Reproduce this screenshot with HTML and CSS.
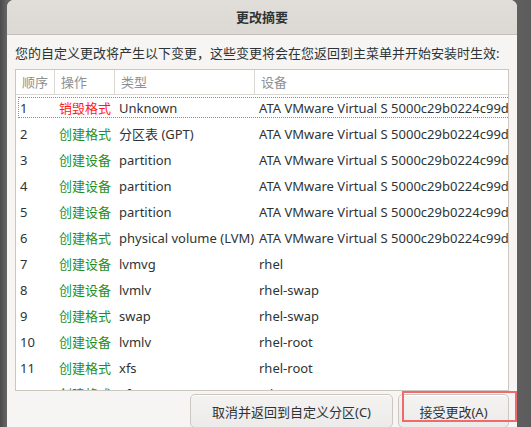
FILE: index.html
```html
<!DOCTYPE html>
<html lang="zh-CN">
<head>
<meta charset="utf-8">
<title>更改摘要</title>
<link rel="stylesheet" href="styles.css">
</head>
<body>
<div class="dialog">
  <div class="titlebar">更改摘要</div>
  <div class="content">
    <div class="desc">您的自定义更改将产生以下变更，这些变更将会在您返回到主菜单并开始安装时生效:</div>
    <div class="table">
      <div class="row head">
        <div class="c c1">顺序</div>
        <div class="c c2">操作</div>
        <div class="c c3">类型</div>
        <div class="c c4">设备</div>
      </div>
      <div class="body">
        <div class="row focus">
          <div class="c c1">1</div><div class="c c2 destroy">销毁格式</div><div class="c c3">Unknown</div><div class="c c4">ATA VMware Virtual S 5000c29b0224c99d</div>
        </div>
        <div class="row">
          <div class="c c1">2</div><div class="c c2 create">创建格式</div><div class="c c3">分区表 (GPT)</div><div class="c c4">ATA VMware Virtual S 5000c29b0224c99d</div>
        </div>
        <div class="row">
          <div class="c c1">3</div><div class="c c2 create">创建设备</div><div class="c c3">partition</div><div class="c c4">ATA VMware Virtual S 5000c29b0224c99d</div>
        </div>
        <div class="row">
          <div class="c c1">4</div><div class="c c2 create">创建设备</div><div class="c c3">partition</div><div class="c c4">ATA VMware Virtual S 5000c29b0224c99d</div>
        </div>
        <div class="row">
          <div class="c c1">5</div><div class="c c2 create">创建设备</div><div class="c c3">partition</div><div class="c c4">ATA VMware Virtual S 5000c29b0224c99d</div>
        </div>
        <div class="row">
          <div class="c c1">6</div><div class="c c2 create">创建格式</div><div class="c c3">physical volume (LVM)</div><div class="c c4">ATA VMware Virtual S 5000c29b0224c99d</div>
        </div>
        <div class="row">
          <div class="c c1">7</div><div class="c c2 create">创建设备</div><div class="c c3">lvmvg</div><div class="c c4">rhel</div>
        </div>
        <div class="row">
          <div class="c c1">8</div><div class="c c2 create">创建设备</div><div class="c c3">lvmlv</div><div class="c c4">rhel-swap</div>
        </div>
        <div class="row">
          <div class="c c1">9</div><div class="c c2 create">创建格式</div><div class="c c3">swap</div><div class="c c4">rhel-swap</div>
        </div>
        <div class="row">
          <div class="c c1">10</div><div class="c c2 create">创建设备</div><div class="c c3">lvmlv</div><div class="c c4">rhel-root</div>
        </div>
        <div class="row">
          <div class="c c1">11</div><div class="c c2 create">创建格式</div><div class="c c3">xfs</div><div class="c c4">rhel-root</div>
        </div>
        <div class="row">
          <div class="c c1">12</div><div class="c c2 create">创建格式</div><div class="c c3">xfs</div><div class="c c4">sda1</div>
        </div>
      </div>
    </div>
    <div class="buttons">
      <button class="btn cancel">取消并返回到自定义分区(C)</button>
      <button class="btn accept">接受更改(A)</button>
    </div>
  </div>
</div>
<div class="highlight"></div>
</body>
</html>
```

FILE: styles.css
```css
html, body {
  margin: 0;
  padding: 0;
}
body {
  width: 531px;
  height: 427px;
  overflow: hidden;
  background: linear-gradient(to right, #4a4a4a 0px, #666 7px, #5f5f5f 517px, #5c5c5c 531px);
  font-family: "Noto Sans", "Noto Sans CJK SC", sans-serif;
  font-size: 13px;
  color: #2e3436;
  position: relative;
}
.dialog {
  margin-left: 7px;
  width: 510px;
  height: 427px;
  background: #f6f5f4;
  border-radius: 7px 7px 0 0;
  overflow: hidden;
  display: flex;
  flex-direction: column;
}
.titlebar {
  height: 34px;
  line-height: 34px;
  text-align: center;
  font-weight: bold;
  background: linear-gradient(#e1deda, #dcd8d4);
  border-bottom: 1px solid #c4bfba;
  flex: none;
}
.content {
  padding: 0 8px;
  display: flex;
  flex-direction: column;
}
.desc {
  padding-top: 9px;
  line-height: 19px;
  height: 19px;
  margin-bottom: 6px;
  white-space: nowrap;
}
.table {
  height: 320px;
  border: 1px solid #cdc7c2;
  background: #fff;
  overflow: hidden;
  display: flex;
  flex-direction: column;
}
.row {
  display: grid;
  grid-template-columns: 39px 60px 140px 1fr;
  height: 26px;
  line-height: 26px;
  position: relative;
}
.row.head {
  height: 24px;
  line-height: 24px;
  border-bottom: 1px solid #dad6d2;
  color: #8f9191;
  flex: none;
}
.row.head .c {
  padding-left: 6px;
  border-right: 1px solid #dad6d2;
}
.row.head .c4 {
  border-right: none;
}
.c {
  padding-left: 4px;
  white-space: nowrap;
  overflow: hidden;
}
.body {
  flex: 1;
  overflow: hidden;
}
.destroy {
  color: #ff1a1a;
}
.create {
  color: #1f8f1f;
}
.row.focus::after {
  content: "";
  position: absolute;
  left: 2px;
  top: 2px;
  right: 0;
  bottom: 3px;
  border: 1px dotted #8c8c8c;
  border-right: none;
  pointer-events: none;
}
.buttons {
  display: flex;
  justify-content: flex-end;
  gap: 5px;
  margin-top: 3px;
}
.btn {
  height: 34px;
  font-family: "Noto Sans", "Noto Sans CJK SC", sans-serif;
  font-size: 13px;
  color: #2e3436;
  background: linear-gradient(#f4f3f2, #edebe9);
  border: 1px solid #cdc7c2;
  border-radius: 5px;
  padding: 0;
  box-shadow: inset 0 1px #fff;
}
.cancel {
  width: 203px;
}
.accept {
  width: 111px;
}
.highlight {
  position: absolute;
  left: 402px;
  top: 391px;
  width: 111px;
  height: 27px;
  border: 2px solid #ef6b6b;
}
```
